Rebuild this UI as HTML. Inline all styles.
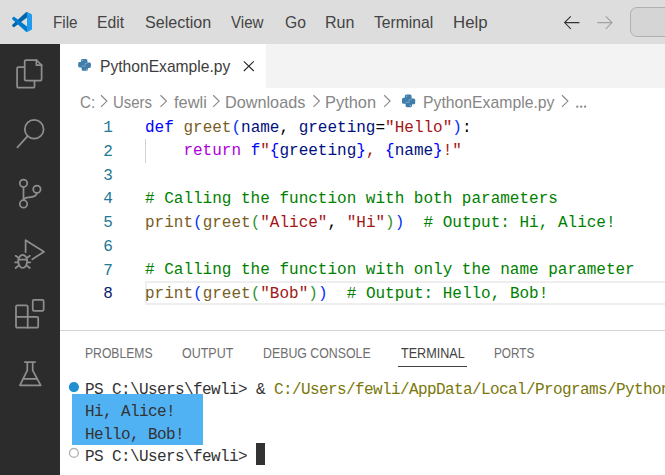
<!DOCTYPE html>
<html><head><meta charset="utf-8">
<style>
html,body{margin:0;padding:0}
body{width:665px;height:475px;overflow:hidden;position:relative;background:#fff;font-family:"Liberation Sans",sans-serif}
.a{position:absolute}
.t{position:absolute;white-space:pre;line-height:20px;transform-origin:0 0}
#title{left:0;top:0;width:665px;height:44px;background:#dddddd}
.menu{font-size:15px;color:#333;top:13px}
#act{left:0;top:44px;width:60px;height:431px;background:#2c2c2c}
#tabs{left:60px;top:44px;width:605px;height:44px;background:#f3f3f3}
#tab{left:60px;top:44px;width:206px;height:44px;background:#fff}
.bc{font-size:15.3px;color:#7f7f7f;top:92.7px}
#gutter{left:60px;top:116.5px;width:52.8px;text-align:right;font-family:"Liberation Mono",monospace;font-size:16px;line-height:23.75px;color:#237893;padding-top:0.5px}
#code{left:145px;top:116px;font-family:"Liberation Mono",monospace;font-size:16px;line-height:23.75px;color:#000;white-space:pre;padding-top:0.5px}
#curline{left:145px;top:281px;width:530px;height:20px;border:2px solid #eeeeee;border-right:none}
.k{color:#0000ff}.fn{color:#795e26}.p{color:#001080}.s{color:#a31515}.ctl{color:#af00db}.c{color:#008000}.b1{color:#0431fa}.b2{color:#319331}
#panel{left:60px;top:330px;width:605px;height:145px;border-top:1px solid #d4d4d4}
.pt{font-size:14px;color:#6f6f6f;top:342.9px;transform-origin:0 0}
#term{left:85px;top:379.1px;font-family:"Liberation Mono",monospace;font-size:16px;letter-spacing:-0.6px;line-height:22.2px;color:#333;white-space:pre}
.y{color:#7a770a}
</style></head>
<body>
<div id="title" class="a"></div>
<div class="t" style="left:53.15px;top:12.48px;font-size:16.2px;color:#444;transform:scaleX(0.940)">File</div>
<div class="t" style="left:97.41px;top:12.48px;font-size:16.2px;color:#444;transform:scaleX(0.971)">Edit</div>
<div class="t" style="left:144.67px;top:12.48px;font-size:16.2px;color:#444;transform:scaleX(0.993)">Selection</div>
<div class="t" style="left:231.03px;top:12.48px;font-size:16.2px;color:#444;transform:scaleX(0.935)">View</div>
<div class="t" style="left:284.51px;top:12.48px;font-size:16.2px;color:#444;transform:scaleX(0.969)">Go</div>
<div class="t" style="left:324.68px;top:12.48px;font-size:16.2px;color:#444;transform:scaleX(0.991)">Run</div>
<div class="t" style="left:373.75px;top:12.48px;font-size:16.2px;color:#444;transform:scaleX(0.968)">Terminal</div>
<div class="t" style="left:453.02px;top:12.48px;font-size:16.2px;color:#444;transform:scaleX(1.038)">Help</div>
<div class="a" style="left:630px;top:7.2px;width:60px;height:27.6px;border:1px solid #b0b0b0;border-radius:7px;background:#d5d5d5"></div>

<div id="act" class="a"></div>
<div id="tabs" class="a"></div>
<div id="tab" class="a"></div>
<div class="t" style="left:100.22px;top:56.22px;font-size:16.1px;color:#3d3d3d;transform:scaleX(0.971)">PythonExample.py</div>

<div class="t" style="left:79.73px;top:92.28px;font-size:16.2px;color:#868686;transform:scaleX(0.935)">C:</div>
<div class="t" style="left:113.35px;top:92.28px;font-size:16.2px;color:#868686;transform:scaleX(0.922)">Users</div>
<div class="t" style="left:173.57px;top:92.28px;font-size:16.2px;color:#868686;transform:scaleX(1.013)">fewli</div>
<div class="t" style="left:225.27px;top:92.28px;font-size:16.2px;color:#868686;transform:scaleX(1.003)">Downloads</div>
<div class="t" style="left:325.45px;top:92.28px;font-size:16.2px;color:#868686;transform:scaleX(1.013)">Python</div>
<div class="t" style="left:423.41px;top:92.28px;font-size:16.2px;color:#868686;transform:scaleX(0.974)">PythonExample.py</div>

<div id="curline" class="a"></div>
<div class="a" style="left:145px;top:139.25px;width:1px;height:23.75px;background:#d3d3d3"></div>
<div id="gutter" class="a">1<br>2<br>3<br>4<br>5<br>6<br>7<br><span style="color:#0b216f">8</span></div>
<div id="code" class="a"><span class="k">def</span> <span class="fn">greet</span><span class="b1">(</span><span class="p">name</span>, <span class="p">greeting</span>=<span class="s">"Hello"</span><span class="b1">)</span>:
    <span class="ctl">return</span> <span class="k">f</span><span class="s">"</span><span class="k">{</span><span class="p">greeting</span><span class="k">}</span><span class="s">, </span><span class="k">{</span><span class="p">name</span><span class="k">}</span><span class="s">!"</span>

<span class="c"># Calling the function with both parameters</span>
<span class="fn">print</span><span class="b1">(</span><span class="fn">greet</span><span class="b2">(</span><span class="s">"Alice"</span>, <span class="s">"Hi"</span><span class="b2">)</span><span class="b1">)</span>  <span class="c"># Output: Hi, Alice!</span>

<span class="c"># Calling the function with only the name parameter</span>
<span class="fn">print</span><span class="b1">(</span><span class="fn">greet</span><span class="b2">(</span><span class="s">"Bob"</span><span class="b2">)</span><span class="b1">)</span>  <span class="c"># Output: Hello, Bob!</span></div>

<div id="panel" class="a"></div>
<div class="t" style="left:84.60px;top:342.88px;font-size:14.2px;color:#6f6f6f;transform:scaleX(0.857)">PROBLEMS</div>
<div class="t" style="left:182.01px;top:342.88px;font-size:14.2px;color:#6f6f6f;transform:scaleX(0.880)">OUTPUT</div>
<div class="t" style="left:262.79px;top:342.88px;font-size:14.2px;color:#6f6f6f;transform:scaleX(0.870)">DEBUG CONSOLE</div>
<div class="t" style="left:400.72px;top:342.88px;font-size:14.2px;color:#424242;transform:scaleX(0.887)">TERMINAL</div>
<div class="t" style="left:493.93px;top:342.88px;font-size:14.2px;color:#6f6f6f;transform:scaleX(0.830)">PORTS</div>
<div class="a" style="left:398px;top:365.5px;width:69px;height:1.5px;background:#424242"></div>

<div class="a" style="left:72px;top:394px;width:131px;height:50.8px;background:#51b2f3"></div>
<div id="term" class="a">PS C:\Users\fewli&gt; &amp; <span class="y">C:/Users/fewli/AppData/Local/Programs/Python/Python312/python.exe</span>
Hi, Alice!
Hello, Bob!
PS C:\Users\fewli&gt; </div>
<div class="a" style="left:256px;top:443px;width:9px;height:22px;background:#333"></div>

<svg class="a" style="left:0;top:0" width="665" height="475" viewBox="0 0 665 475" fill="none">
  <!-- vscode logo -->
  <g transform="translate(12,12) scale(0.2)">
    <path fill="#0065A9" d="M96.4614 10.7962L75.8569 0.875542C73.4719 -0.272773 70.6217 0.211611 68.75 2.08333L1.29858 63.5832C-0.515693 65.2373 -0.513607 68.0937 1.30308 69.7452L6.81272 74.754C8.29793 76.1042 10.5347 76.2036 12.1338 74.9905L93.3609 13.3699C96.086 11.3026 100 13.2462 100 16.6667V16.4275C100 14.0265 98.6246 11.8378 96.4614 10.7962Z"/>
    <path fill="#007ACC" d="M96.4614 89.2038L75.8569 99.1245C73.4719 100.273 70.6217 99.7884 68.75 97.9167L1.29858 36.4169C-0.515693 34.7627 -0.513607 31.9063 1.30308 30.2548L6.81272 25.246C8.29793 23.8958 10.5347 23.7964 12.1338 25.0095L93.3609 86.6301C96.086 88.6974 100 86.7538 100 83.3334V83.5726C100 85.9735 98.6246 88.1622 96.4614 89.2038Z"/>
    <path fill="#1F9CF0" d="M75.8578 99.1263C73.4721 100.274 70.6219 99.7885 68.75 97.9166C71.0564 100.223 75 98.5895 75 95.3278V4.67213C75 1.41039 71.0564 -0.223106 68.75 2.08329C70.6219 0.211402 73.4721 -0.273666 75.8578 0.873633L96.4587 10.7807C98.6234 11.8217 100 14.0112 100 16.4132V83.5871C100 85.9893 98.6234 88.1788 96.4586 89.2198L75.8578 99.1263Z"/>
  </g>
  <!-- nav arrows -->
  <path d="M570.8 16.4L564.6 22.6L570.8 28.8M564.6 22.6H579.4" stroke="#333" stroke-width="1.1"/>
  <path d="M605.8 16.4L612 22.6L605.8 28.8M612 22.6H597.2" stroke="#a2a2a2" stroke-width="1.1"/>
  <!-- close x -->
  <path d="M243.8 61.4L253.8 71M253.8 61.4L243.8 71" stroke="#252525" stroke-width="1.05"/>
  <!-- python icons -->
  <g transform="translate(78.2,58.9) scale(1.0,1.0)" fill="#3f7dab">
    <path d="M4.2 0H7.7Q9.2 0 9.2 1.5V4.6H6.9V8.5H1.4Q0 8.5 0 7.1V4.4Q0 3 1.4 3H2.7V1.5Q2.7 0 4.2 0Z"/><path d="M5.8 3.7H11.3Q12.7 3.7 12.7 5.1V7.6Q12.7 9 11.3 9H9.7V10.3Q9.7 11.8 8.2 11.8H4.9Q3.4 11.8 3.4 10.3V7.2H5.8Z"/>
    <path stroke="#fff" stroke-opacity="0.6" stroke-width="0.45" fill="none" d="M3.4 7.2H6.9V4.6H9.2"/>
    <circle cx="4.5" cy="1.5" r="0.5" fill="#fff" fill-opacity="0.7"/><circle cx="8.2" cy="10.3" r="0.5" fill="#fff" fill-opacity="0.7"/>
  </g>
  <g transform="translate(402,94.5) scale(1.04,1.08)" fill="#3f7dab">
    <path d="M4.2 0H7.7Q9.2 0 9.2 1.5V4.6H6.9V8.5H1.4Q0 8.5 0 7.1V4.4Q0 3 1.4 3H2.7V1.5Q2.7 0 4.2 0Z"/><path d="M5.8 3.7H11.3Q12.7 3.7 12.7 5.1V7.6Q12.7 9 11.3 9H9.7V10.3Q9.7 11.8 8.2 11.8H4.9Q3.4 11.8 3.4 10.3V7.2H5.8Z"/>
    <path stroke="#fff" stroke-opacity="0.6" stroke-width="0.45" fill="none" d="M3.4 7.2H6.9V4.6H9.2"/>
    <circle cx="4.5" cy="1.5" r="0.5" fill="#fff" fill-opacity="0.7"/><circle cx="8.2" cy="10.3" r="0.5" fill="#fff" fill-opacity="0.7"/>
  </g>
  <!-- breadcrumb chevrons -->
  <g fill="#858585"><circle cx="577.3" cy="106.7" r="1.15"/><circle cx="581.2" cy="106.7" r="1.15"/><circle cx="585.1" cy="106.7" r="1.15"/></g>
  <g stroke="#8a8a8a" stroke-width="1.2">
    <path d="M101.0 95.3L106.9 101.1L101.0 106.9"/>
    <path d="M160.5 95.3L166.4 101.1L160.5 106.9"/>
    <path d="M213.2 95.3L219.1 101.1L213.2 106.9"/>
    <path d="M313.5 95.3L319.4 101.1L313.5 106.9"/>
    <path d="M384.2 95.3L390.1 101.1L384.2 106.9"/>
    <path d="M562.0 95.3L567.9 101.1L562.0 106.9"/>
  </g>
  <!-- activity bar icons -->
  <g stroke="#8e8e8e" stroke-width="1.75" stroke-linejoin="round" stroke-linecap="round">
    <path d="M24 67H18.4A1.3 1.3 0 0 0 17.1 68.3V86.4A1.3 1.3 0 0 0 18.4 87.7H33.2A1.3 1.3 0 0 0 34.5 86.4V81.2"/>
    <path d="M26 60H36.4L41.6 65.2V79.3A1.3 1.3 0 0 1 40.3 80.6H26A1.3 1.3 0 0 1 24.7 79.3V61.3A1.3 1.3 0 0 1 26 60Z"/>
    <path d="M36.4 60V65.2H41.6"/>
    <circle cx="34.2" cy="129.3" r="9.4"/>
    <path d="M27.6 136.2L17.4 147.4"/>
    <circle cx="23.5" cy="183.3" r="3.7"/>
    <circle cx="23.5" cy="203.9" r="3.7"/>
    <circle cx="36.9" cy="189.2" r="3.7"/>
    <path d="M23.5 187V200.2"/>
    <path d="M36.9 192.9Q36.6 197 29 197.4Q24 197.8 23.5 200"/>
    <path d="M25.6 252.2V240.2L44 251.7L32.3 259.3"/>
    <ellipse cx="22.7" cy="261.3" rx="4.4" ry="6.5"/>
    <path d="M18.4 259.7H27M18 257.4L15.6 255.8M27.4 257.4L29.8 255.8M18 262.4H15.2M27.4 262.4H30.2M18.4 265.8L15.6 268M27 265.8L29.8 268"/>
    <rect x="32.75" y="299.85" width="10.9" height="11" rx="1.3"/>
    <path d="M17.3 305.3H26.4A1.3 1.3 0 0 1 27.7 306.6V316.8H36.9A1.3 1.3 0 0 1 38.2 318.1V326.4A1.3 1.3 0 0 1 36.9 327.7H17.3A1.3 1.3 0 0 1 16 326.4V306.6A1.3 1.3 0 0 1 17.3 305.3Z"/>
    <path d="M16 316.8H27.7V327.7"/>
    <path d="M24.9 362H35.1M27.3 362V370.4L19.9 385.3H40.7L32.7 370.4V362M22.9 378.8H37.1"/>
  </g>
  <!-- terminal decorations -->
  <circle cx="73.9" cy="387.1" r="5.1" fill="#2090d3"/>
  <circle cx="73.9" cy="452.9" r="4.4" stroke="#b4b4b4" stroke-width="1.4"/>
</svg>
</body></html>
